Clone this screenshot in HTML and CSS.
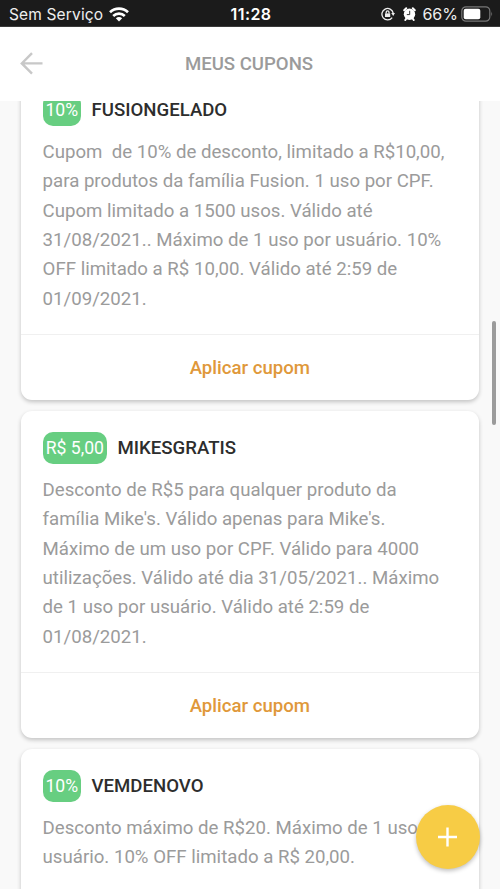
FILE: index.html
```html
<!DOCTYPE html>
<html lang="pt-BR">
<head>
<meta charset="utf-8">
<title>Meus cupons</title>
<link rel="stylesheet" href="styles.css">
</head>
<body>
<div class="screen">
  <div class="status">
    <div class="status-left">
      <span class="carrier">Sem Serviço</span>
      <svg class="wifi" width="20" height="15" viewBox="0 0 20 15" fill="none" stroke="#fff" stroke-width="2.7">
        <path d="M1 5.3C6 .5 14 .5 19 5.3"/><path d="M4.2 9C7.5 5.9 12.5 5.9 15.8 9"/><path d="M6.8 11.3Q10 8.6 13.2 11.3L10 14.6Z" fill="#fff" stroke="none"/>
      </svg>
    </div>
    <span class="clock">11:28</span>
    <div class="status-right">
      <svg width="14" height="14" viewBox="0 0 14 14" fill="none" stroke="#eee" stroke-width="1.3">
        <path d="M11.2 10.6A5.7 5.7 0 1 1 12.2 6"/><path d="M10.2 6h3.8L12.2 8.9Z" fill="#eee" stroke="none"/><path d="M4 6.4h5.2V10H4Z" fill="#eee" stroke="none"/><path d="M5.2 6.6V5.2a1.4 1.4 0 0 1 2.8 0v1.4"/>
      </svg>
      <svg class="alarm" width="13" height="14" viewBox="0 0 13 14">
        <circle cx="6.5" cy="7.2" r="5.7" fill="#fff"/><path d="M1.2 3.2 3.2 1.3M11.8 3.2 9.8 1.3M2.3 13l1.5-2M10.7 13l-1.5-2" stroke="#fff" stroke-width="2" stroke-linecap="round"/><path d="M6.7 3.8v3.8H3.8" fill="none" stroke="#333" stroke-width="1"/>
      </svg>
      <span class="percent">66%</span>
      <svg width="32" height="16" viewBox="0 0 32 16">
        <rect x=".8" y=".8" width="28" height="14.4" rx="4.2" fill="none" stroke="#777" stroke-width="1.2"/><rect x="2.7" y="2.8" width="16.6" height="10.4" rx="2" fill="#fff"/><path d="M30.3 5.6Q32 8 30.3 10.4Z" fill="#777"/>
      </svg>
    </div>
  </div>
  <header class="header">
    <svg class="back" width="24" height="24" viewBox="0 0 24 24" fill="none" stroke="#c8c8c8" stroke-width="2.4">
      <path d="M12 1.2 1.8 11.4 12 21.6M1.5 11.4h21"/>
    </svg>
    <h1 class="title">MEUS CUPONS</h1>
  </header>
  <main class="viewport">
    <div class="list">
      <article class="card">
        <div class="card-body">
          <div class="card-head"><span class="badge">10%</span><h2 class="code">FUSIONGELADO</h2></div>
          <p class="text">Cupom&nbsp; de 10% de desconto, limitado a R$10,00,<br>para produtos da família Fusion. 1 uso por CPF.<br>Cupom limitado a 1500 usos. Válido até<br>31/08/2021.. Máximo de 1 uso por usuário. 10%<br>OFF limitado a R$ 10,00. Válido até 2:59 de<br>01/09/2021.</p>
        </div>
        <div class="apply">Aplicar cupom</div>
      </article>
      <article class="card">
        <div class="card-body">
          <div class="card-head"><span class="badge badge-wide">R$ 5,00</span><h2 class="code">MIKESGRATIS</h2></div>
          <p class="text">Desconto de R$5 para qualquer produto da<br>família Mike's. Válido apenas para Mike's.<br>Máximo de um uso por CPF. Válido para 4000<br>utilizações. Válido até dia 31/05/2021.. Máximo<br>de 1 uso por usuário. Válido até 2:59 de<br>01/08/2021.</p>
        </div>
        <div class="apply">Aplicar cupom</div>
      </article>
      <article class="card">
        <div class="card-body">
          <div class="card-head"><span class="badge">10%</span><h2 class="code">VEMDENOVO</h2></div>
          <p class="text">Desconto máximo de R$20. Máximo de 1 uso por<br>usuário. 10% OFF limitado a R$ 20,00.</p>
        </div>
      </article>
    </div>
  </main>
  <div class="scrollbar"></div>
  <div class="fab">
    <svg width="20" height="20" viewBox="0 0 20 20" stroke="#fff" stroke-width="2.4"><path d="M9.5 .5v19M0 10h19"/></svg>
  </div>
</div>
</body>
</html>
```
FILE: styles.css
```css
* { box-sizing: border-box; }
body { margin: 0; font-family: Roboto, "Liberation Sans", sans-serif; }
h1, h2, p { margin: 0; }
svg { display: block; flex: none; }
.screen {
  position: relative;
  display: flex;
  flex-direction: column;
  height: 889px;
  overflow: hidden;
  background: #f9f9f9;
}
.status {
  display: grid;
  grid-template-columns: 1fr auto 1fr;
  align-items: center;
  flex: none;
  height: 27px;
  padding: 1px 7px 0 9px;
  background: #1b1b1b;
  border-bottom: 1px solid #3a3a3a;
  color: #eee;
  font: 16px/25px Inter, sans-serif;
}
.status-left, .status-right { display: flex; align-items: center; }
.status-left { gap: 6px; }
.status-right { justify-content: flex-end; }
.carrier { padding-top: 1px; font-size: 15.5px; letter-spacing: 0.15px; }
.clock { padding-top: 1px; font-weight: 600; color: #fff; letter-spacing: 0.4px; }
.alarm { margin: 0 6px 0 8px; }
.percent { padding-top: 1px; margin-right: 3px; }
.header {
  display: grid;
  grid-template-columns: 24px 1fr 24px;
  align-items: center;
  flex: none;
  height: 74px;
  padding: 0 22px 1px 20px;
  background: #fff;
}
.title {
  font-size: 18.6px;
  font-weight: 500;
  line-height: 24px;
  text-align: center;
  color: #9b9b9b;
}
.viewport { flex: 1; min-height: 0; overflow: hidden; }
.list {
  display: flex;
  flex-direction: column;
  gap: 10.5px;
  margin-top: -28.5px;
  padding: 0 21.5px 0 21.2px;
}
.card {
  flex: none;
  height: 327.5px;
  border-radius: 11px;
  background: #fff;
  box-shadow: 0 2px 4px rgba(0, 0, 0, 0.22);
}
.card-body { height: 261.5px; padding: 21px 21.4px 0; }
.card-head { display: flex; align-items: center; height: 32px; gap: 10.5px; }
.badge {
  width: 38.5px;
  height: 32px;
  border-radius: 10px;
  background: #67ce81;
  color: #fff;
  font-size: 17.6px;
  line-height: 32px;
  text-align: center;
  white-space: nowrap;
}
.badge-wide { width: 64.5px; }
.code { font-size: 18.6px; font-weight: 500; line-height: 16px; color: #2d2d2d; }
.text {
  margin-top: 12.5px;
  font-size: 18.65px;
  line-height: 29.33px;
  white-space: nowrap;
  color: #9b9b9b;
}
.apply {
  height: 66px;
  border-top: 1px solid #f0f0f0;
  color: #e0983a;
  font-size: 18.6px;
  font-weight: 500;
  line-height: 66.5px;
  text-align: center;
}
.scrollbar {
  position: absolute;
  top: 321px;
  right: 4px;
  width: 4px;
  height: 104px;
  border-radius: 2px;
  background: #9b9b9b;
}
.fab {
  position: absolute;
  top: 805px;
  left: 416px;
  display: flex;
  align-items: center;
  justify-content: center;
  width: 64px;
  height: 64px;
  border-radius: 50%;
  background: #f7cc45;
  box-shadow: 0 2px 4px rgba(0, 0, 0, 0.25);
}
```
